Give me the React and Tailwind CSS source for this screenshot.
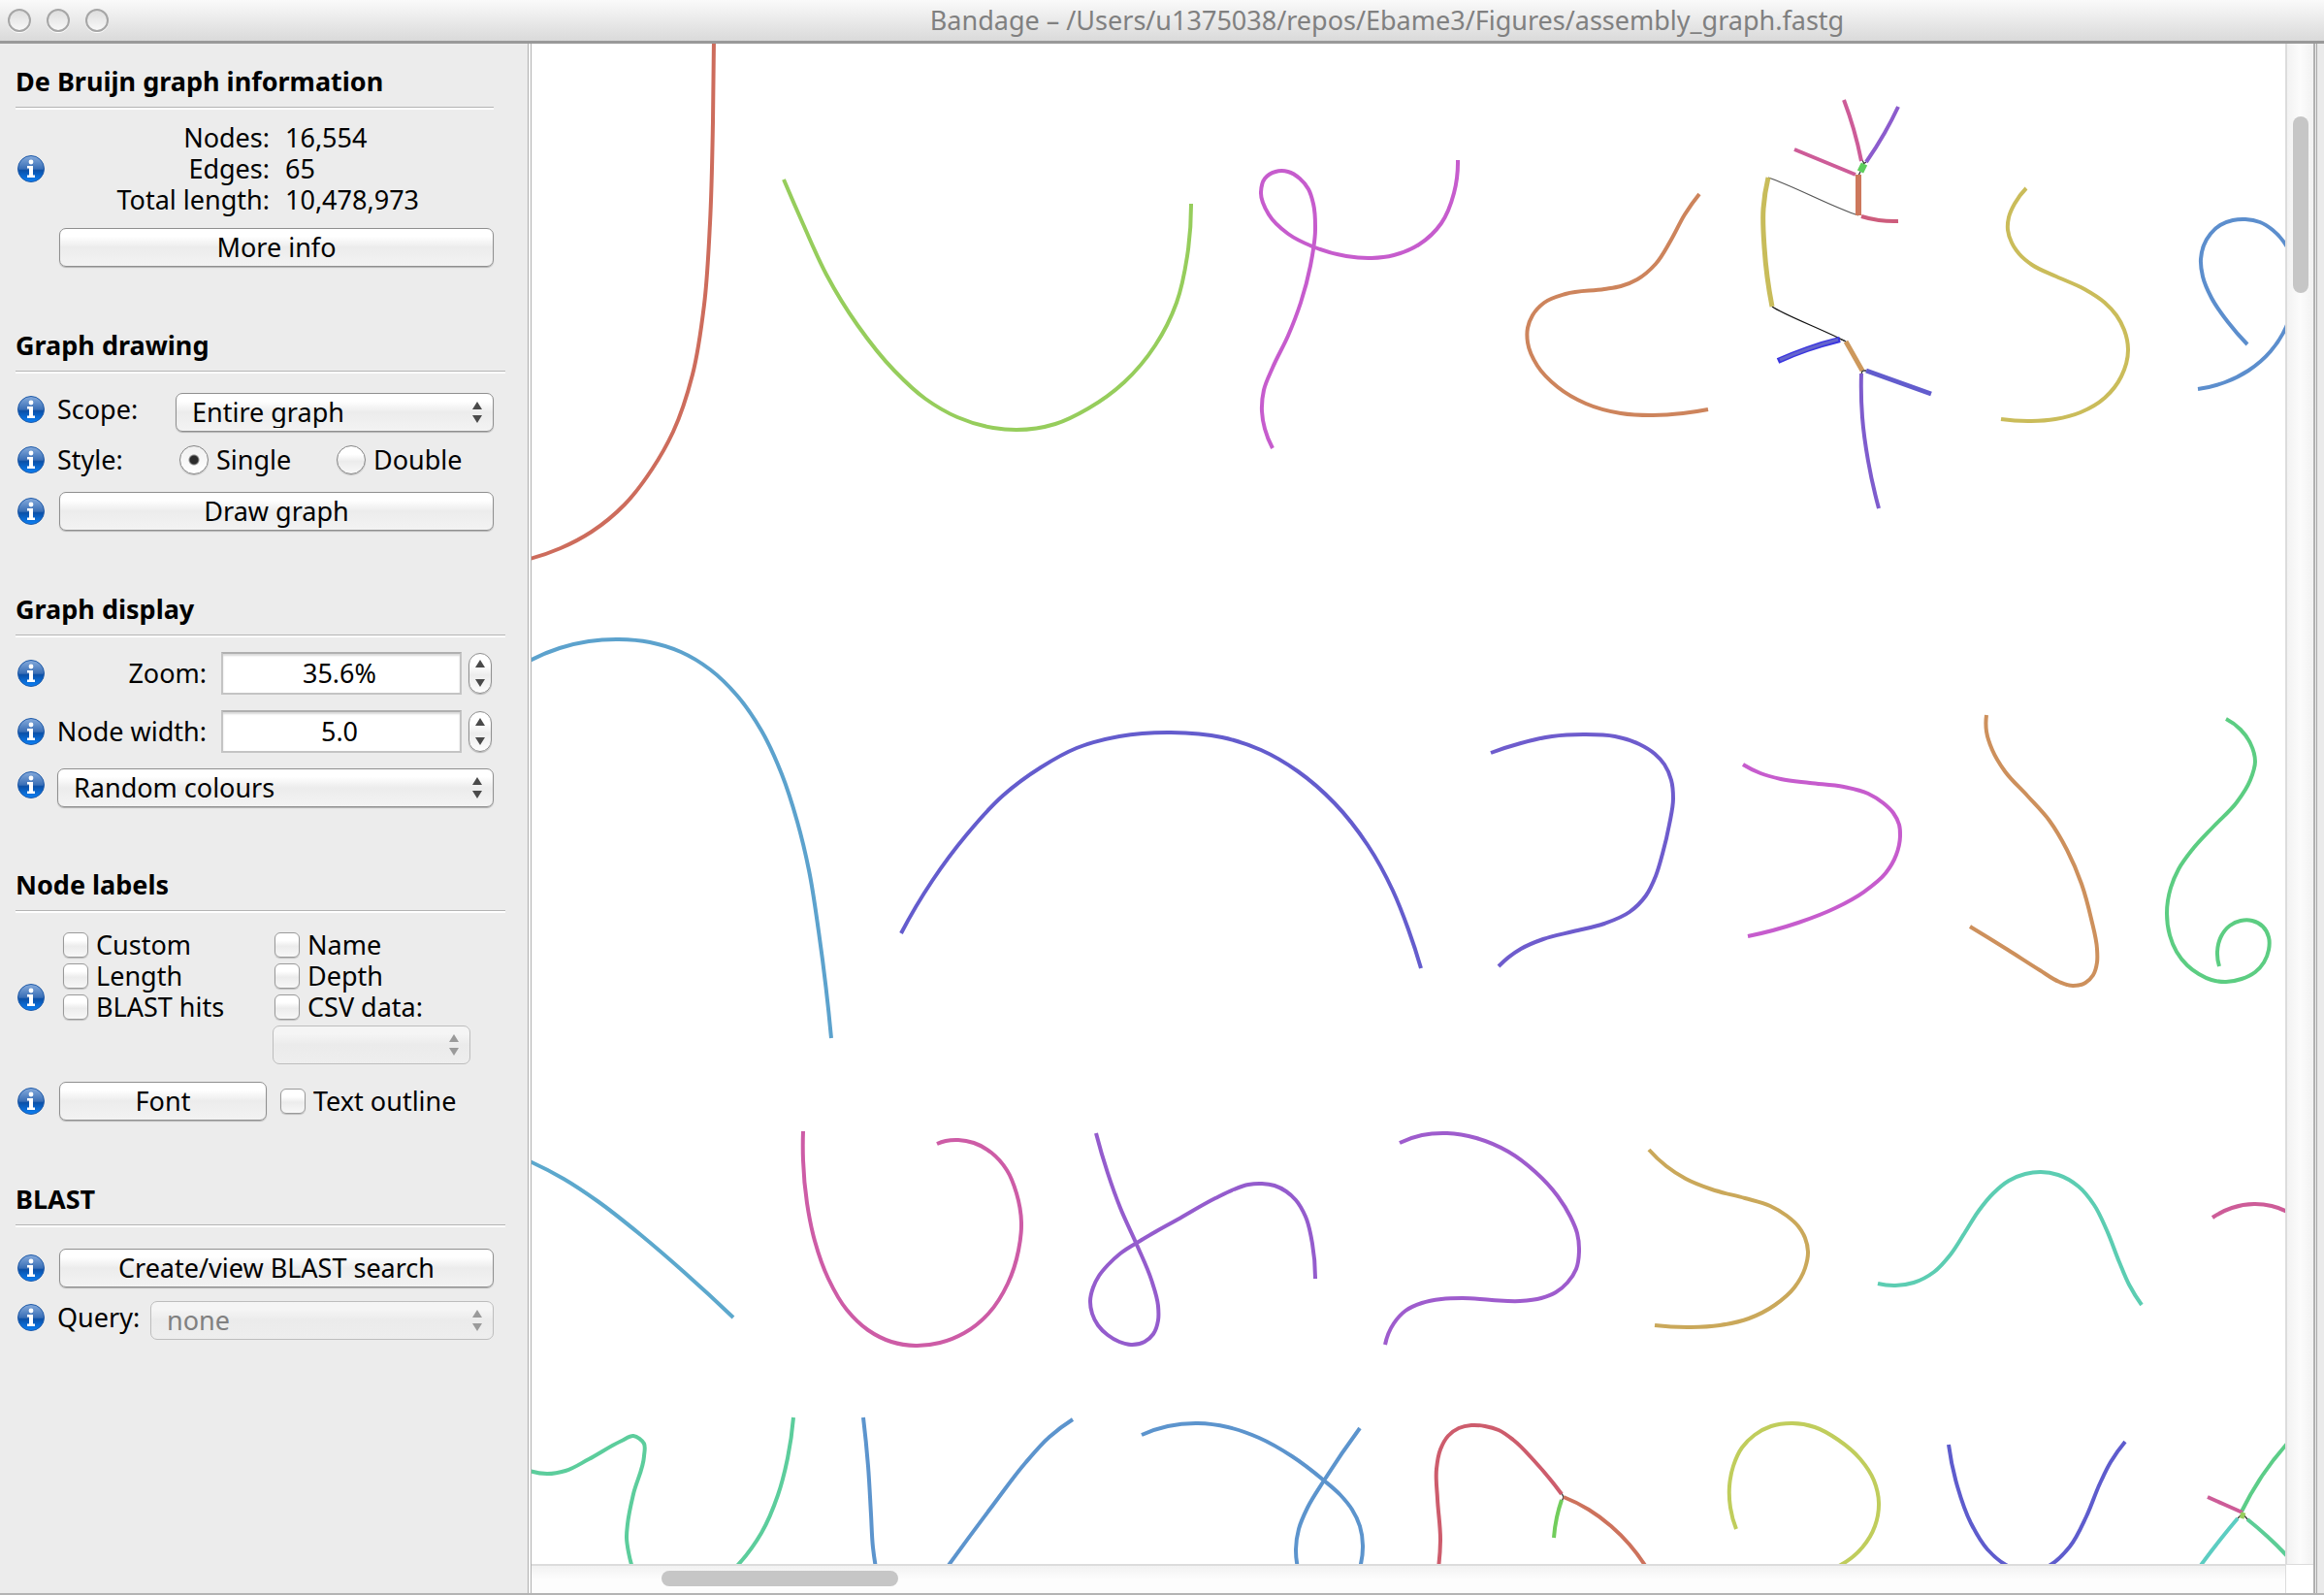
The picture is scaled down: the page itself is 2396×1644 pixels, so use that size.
import { useId, useState } from "react";

/*
 * Smooth path through a flat list of x,y values: cubic Beziers whose tangents
 * are weighted by the chord length on either side of each point.
 */
function smooth(flat) {
  const p = [];
  for (let i = 0; i < flat.length; i += 2) p.push([flat[i], flat[i + 1]]);
  const n = p.length;
  const len = [];
  for (let i = 0; i < n - 1; i++) len.push(Math.hypot(p[i + 1][0] - p[i][0], p[i + 1][1] - p[i][1]));
  const slope = (i, k) => (p[i + 1][k] - p[i][k]) / len[i];
  const tan = p.map((_, i) =>
    [0, 1].map((k) => {
      if (n === 2) return slope(0, k);
      const mid = (j) => (slope(j - 1, k) * len[j] + slope(j, k) * len[j - 1]) / (len[j - 1] + len[j]);
      if (i === 0) return 2 * slope(0, k) - mid(1);
      if (i === n - 1) return 2 * slope(n - 2, k) - mid(n - 2);
      return mid(i);
    })
  );
  let d = `M${p[0][0]} ${p[0][1]}`;
  for (let i = 0; i < n - 1; i++) {
    const h = len[i] / 3;
    d += `C${p[i][0] + tan[i][0] * h} ${p[i][1] + tan[i][1] * h} ${p[i + 1][0] - tan[i + 1][0] * h} ${p[i + 1][1] - tan[i + 1][1] * h} ${p[i + 1][0]} ${p[i + 1][1]}`;
  }
  return d;
}

/* Graph nodes: colour, points, optional stroke width. */
const NODES = [
  ["#cd6c5c", [736, 40, 735, 126, 732, 230, 726, 314, 714, 386, 694, 445, 672, 484, 644, 520, 610, 548, 578, 565, 546, 576]],
  ["#96cd5c", [808, 185, 828, 231, 852, 283, 884, 335, 922, 382, 954, 411, 987, 430, 1024, 441, 1048, 443, 1088, 437, 1122, 421, 1159, 394, 1191, 356, 1213, 312, 1224, 264, 1228, 210]],
  ["#c65ccd", [1503, 165, 1499, 199, 1486, 230, 1463, 252, 1437, 263, 1414, 266, 1388, 264, 1353, 254, 1328, 241, 1308, 221, 1300, 198, 1304, 184, 1315, 177, 1328, 177, 1340, 184, 1349, 195, 1354, 210, 1356, 237, 1351, 274, 1341, 312, 1328, 346, 1312, 379, 1303, 402, 1301, 424, 1304, 442, 1312, 462]],
  ["#cd845c", [1752, 200, 1737, 221, 1723, 247, 1707, 272, 1688, 288, 1671, 295, 1654, 298, 1614, 303, 1592, 312, 1580, 325, 1575, 338, 1575, 353, 1585, 377, 1606, 399, 1635, 416, 1671, 426, 1704, 428, 1735, 426, 1761, 422]],
  ["#cd5c98", [1850, 154, 1913, 180]],
  ["#cd5c98", [1901, 103, 1911, 133, 1919, 166]],
  ["#8c5ccd", [1957, 110, 1943, 137, 1924, 167]],
  ["#5ccd5c", [1922, 169, 1918, 177], 7],
  ["#cd785c", [1916, 180, 1916, 222], 6],
  ["#cd5c7c", [1919, 223, 1937, 227, 1957, 228]],
  ["#c8bc5a", [1823, 183, 1818, 215, 1819, 255, 1827, 316], 5],
  ["#3a35e0", [1833, 372, 1863, 360, 1897, 350], 6],
  ["#6464cd", [1835, 371, 1863, 360, 1895, 350], 3],
  ["#cd985c", [1903, 352, 1920, 382], 5],
  ["#625ccd", [1924, 382, 1991, 406], 5],
  ["#7e5ccd", [1919, 385, 1920, 430, 1926, 475, 1937, 524]],
  ["#cabc5a", [2089, 194, 2077, 210, 2071, 224, 2070, 237, 2074, 250, 2082, 262, 2095, 273, 2120, 285, 2149, 298, 2170, 312, 2182, 325, 2190, 340, 2194, 360, 2187, 388, 2170, 410, 2145, 425, 2119, 432, 2094, 434, 2063, 432]],
  ["#5c8ecd", [2317, 355, 2297, 332, 2280, 307, 2271, 285, 2269, 267, 2272, 253, 2279, 241, 2289, 232, 2302, 227, 2315, 226, 2330, 229, 2343, 237, 2357, 253, 2366, 293, 2357, 337, 2341, 362, 2318, 382, 2294, 394, 2266, 401]],

  ["#5ca2cd", [546, 681, 577, 668, 607, 661, 638, 659, 670, 662, 702, 672, 732, 690, 760, 717, 785, 753, 806, 798, 822, 847, 834, 897, 844, 960, 857, 1070]],
  ["#645ccd", [929, 962, 961, 908, 996, 861, 1034, 820, 1073, 791, 1110, 771, 1154, 759, 1207, 755, 1260, 760, 1300, 773, 1338, 795, 1376, 828, 1410, 871, 1436, 918, 1452, 958, 1465, 998]],
  ["#6e5ccd", [1537, 776, 1568, 766, 1600, 759, 1633, 757, 1665, 759, 1690, 767, 1706, 777, 1716, 788, 1723, 804, 1725, 823, 1721, 850, 1714, 880, 1707, 903, 1697, 923, 1680, 940, 1654, 952, 1622, 960, 1591, 968, 1568, 978, 1545, 996]],
  ["#c65ccd", [1797, 788, 1815, 797, 1836, 803, 1866, 807, 1901, 811, 1926, 818, 1942, 828, 1952, 838, 1958, 850, 1959, 862, 1955, 881, 1944, 900, 1922, 919, 1892, 936, 1854, 951, 1802, 965]],
  ["#cd905c", [2048, 737, 2048, 754, 2054, 773, 2067, 795, 2090, 820, 2113, 846, 2131, 876, 2146, 911, 2156, 947, 2162, 978, 2162, 992, 2158, 1005, 2150, 1013, 2137, 1016, 2123, 1012, 2103, 1000, 2070, 979, 2031, 955]],
  ["#5ccd82", [2295, 741, 2310, 752, 2320, 766, 2325, 785, 2320, 804, 2306, 827, 2282, 852, 2260, 876, 2246, 896, 2238, 915, 2234, 941, 2237, 964, 2244, 981, 2255, 995, 2267, 1004, 2280, 1010, 2295, 1012, 2311, 1009, 2325, 1002, 2334, 992, 2339, 979, 2339, 966, 2333, 955, 2322, 949, 2310, 949, 2299, 954, 2290, 965, 2286, 981, 2288, 996]],

  ["#5ca8cd", [546, 1197, 581, 1215, 616, 1238, 662, 1274, 705, 1311, 756, 1358]],
  ["#cd5ca6", [828, 1166, 828, 1196, 832, 1240, 840, 1279, 854, 1318, 873, 1350, 895, 1371, 919, 1383, 944, 1387, 969, 1384, 994, 1374, 1019, 1354, 1039, 1323, 1050, 1289, 1053, 1260, 1048, 1230, 1038, 1206, 1022, 1188, 1004, 1178, 988, 1175, 975, 1176, 966, 1179]],
  ["#945ccd", [1130, 1168, 1142, 1209, 1155, 1245, 1172, 1283, 1187, 1319, 1194, 1346, 1194, 1361, 1189, 1375, 1180, 1383, 1166, 1386, 1154, 1383, 1142, 1376, 1132, 1366, 1126, 1354, 1124, 1341, 1127, 1327, 1133, 1315, 1142, 1304, 1155, 1292, 1177, 1278, 1214, 1257, 1253, 1235, 1272, 1226, 1287, 1221, 1301, 1220, 1314, 1222, 1326, 1228, 1336, 1237, 1346, 1254, 1353, 1282, 1356, 1318]],
  ["#9e5ccd", [1443, 1178, 1466, 1170, 1492, 1168, 1522, 1173, 1555, 1187, 1583, 1208, 1606, 1233, 1619, 1254, 1626, 1271, 1628, 1290, 1625, 1308, 1616, 1322, 1604, 1332, 1589, 1338, 1567, 1341, 1538, 1340, 1508, 1338, 1486, 1339, 1466, 1343, 1449, 1351, 1437, 1364, 1428, 1386]],
  ["#caa85a", [1700, 1185, 1718, 1202, 1738, 1215, 1765, 1226, 1799, 1235, 1825, 1243, 1842, 1253, 1854, 1264, 1861, 1276, 1864, 1290, 1861, 1307, 1850, 1327, 1830, 1345, 1803, 1359, 1773, 1366, 1743, 1368, 1706, 1366]],
  ["#5ccdb2", [1936, 1323, 1954, 1325, 1973, 1322, 1994, 1311, 2011, 1293, 2026, 1270, 2040, 1248, 2055, 1230, 2071, 1217, 2088, 1210, 2104, 1208, 2122, 1211, 2143, 1223, 2159, 1242, 2172, 1268, 2185, 1301, 2195, 1324, 2208, 1345]],
  ["#cd5c98", [2281, 1255, 2301, 1245, 2324, 1241, 2342, 1243, 2360, 1250]],

  ["#5ccd9c", [546, 1516, 564, 1519, 583, 1516, 607, 1504, 641, 1485, 653, 1480, 664, 1488, 664, 1501, 653, 1540, 647, 1571, 646, 1585, 648, 1600, 652, 1616]],
  ["#5ccd9c", [818, 1461, 812, 1503, 802, 1541, 785, 1580, 758, 1616]],
  ["#5c94cd", [890, 1461, 895, 1511, 898, 1561, 900, 1595, 903, 1616]],
  ["#5c94cd", [1106, 1463, 1082, 1481, 1057, 1508, 1024, 1551, 976, 1616]],
  ["#5c94cd", [1177, 1479, 1204, 1470, 1235, 1467, 1266, 1471, 1298, 1482, 1332, 1501, 1365, 1526, 1382, 1541, 1394, 1556, 1402, 1573, 1405, 1593, 1402, 1616]],
  ["#5c94cd", [1402, 1472, 1365, 1526, 1348, 1554, 1339, 1576, 1336, 1597, 1338, 1616]],
  ["#cd5c6c", [1483, 1616, 1485, 1588, 1482, 1545, 1481, 1514, 1485, 1494, 1493, 1480, 1504, 1472, 1517, 1469, 1531, 1470, 1545, 1474, 1560, 1484, 1582, 1506, 1610, 1540]],
  ["#72cd5c", [1610, 1546, 1605, 1564, 1602, 1585]],
  ["#cd725c", [1612, 1543, 1638, 1556, 1661, 1573, 1680, 1592, 1697, 1615]],
  ["#c0cd5c", [1790, 1576, 1784, 1554, 1783, 1532, 1787, 1511, 1796, 1492, 1809, 1479, 1826, 1470, 1848, 1467, 1871, 1471, 1895, 1484, 1918, 1504, 1932, 1526, 1937, 1549, 1933, 1573, 1920, 1595, 1894, 1615]],
  ["#5e5ccd", [2009, 1489, 2018, 1532, 2032, 1570, 2049, 1597, 2068, 1613, 2090, 1621, 2114, 1613, 2134, 1594, 2151, 1563, 2165, 1529, 2176, 1507, 2191, 1486]],
  ["#5ccd88", [2311, 1558, 2333, 1520, 2358, 1488]],
  ["#cd5c98", [2276, 1543, 2312, 1559]],
  ["#5ccdc2", [2307, 1565, 2289, 1587, 2267, 1616]],
  ["#5ccd96", [2317, 1566, 2338, 1584, 2360, 1606]],
  ["#96cd5c", [2313, 1559, 2311, 1565], 5],
];

/* Thin links between nodes. */
const EDGES = [
  ["#555555", "M1823 183C1850 192 1890 214 1916 222"],
  ["#111111", "M1827 316C1838 324 1880 340 1903 352"],
  ["#333333", "M1920 165L1922 169M1924 167L1921 169M1918 177L1916 181M1903 352L1896 349M1920 382L1919 386M1920 382L1924 382"],
  ["#333333", "M1610 1539L1612 1543L1610 1548M2307 1565L2312 1560L2318 1567"],
];

function GraphCanvas() {
  return (
    <svg
      className="block h-full w-full"
      viewBox="548 45 1808 1567"
      preserveAspectRatio="xMinYMin slice"
      fill="none"
      role="img"
      aria-label="Assembly graph"
    >
      {EDGES.map(([c, d], i) => (
        <path key={i} d={d} stroke={c} strokeWidth="1.3" />
      ))}
      {NODES.map(([c, pts, w], i) => (
        <path key={i} d={smooth(pts)} stroke={c} strokeWidth={w || 4} strokeLinejoin="round" />
      ))}
    </svg>
  );
}

function InfoButton({ topic }) {
  const id = useId();
  return (
    <button type="button" aria-label={`About ${topic}`} className="size-7 shrink-0">
      <svg viewBox="0 0 28 28" className="block size-7">
        <defs>
          <linearGradient id={id} x1="0" y1="0" x2="0" y2="1">
            <stop offset="0" stopColor="#86abdc" />
            <stop offset="0.5" stopColor="#3a6fb6" />
            <stop offset="0.56" stopColor="#0a50a8" />
            <stop offset="1" stopColor="#0a80f6" />
          </linearGradient>
        </defs>
        <circle cx="14" cy="14" r="13.5" fill={`url(#${id})`} stroke="#1f5aa8" />
        <circle cx="14" cy="7" r="2.4" fill="#fff" />
        <path d="M10 11h6v9.5h2V23h-8v-2.500h2V13.500h-2z" fill="#fff" />
      </svg>
    </button>
  );
}

function PushButton({ children, className = "" }) {
  return (
    <button
      type="button"
      className={`h-10 rounded-[7px] border border-[#8f8f8f] bg-linear-to-b from-white from-20% via-[#ececec] via-50% to-[#f3f3f3] text-center leading-9 shadow-[0_1px_1px_rgba(0,0,0,0.25)] ${className}`}
    >
      {children}
    </button>
  );
}

function Arrows({ className }) {
  return (
    <svg viewBox="0 0 10 22" className={`pointer-events-none absolute top-[9px] right-3 h-[22px] w-[10px] ${className}`}>
      <path d="M5 0L10 8H0zM5 22L10 14H0z" fill="currentColor" />
    </svg>
  );
}

function Popup({ id, label, options, disabled, className = "" }) {
  return (
    <div className={`relative ${className}`}>
      <select
        id={id}
        aria-label={label}
        disabled={disabled}
        className="block h-10 w-full appearance-none rounded-[7px] border border-[#8f8f8f] bg-linear-to-b from-white from-20% via-[#ececec] via-50% to-[#f3f3f3] pr-8 pl-4 shadow-[0_1px_1px_rgba(0,0,0,0.25)] disabled:border-[#bdbdbd] disabled:from-[#f5f5f5] disabled:via-[#ebebeb] disabled:to-[#eeeeee] disabled:text-[#808080] disabled:opacity-100 disabled:shadow-none"
      >
        {options.map((o) => (
          <option key={o}>{o}</option>
        ))}
      </select>
      <Arrows className={disabled ? "text-[#9a9a9a]" : "text-[#4a4a4a]"} />
    </div>
  );
}

function CheckBox({ children }) {
  return (
    <label className="flex h-8 items-center gap-2 whitespace-nowrap">
      <input
        type="checkbox"
        className="size-[26px] shrink-0 appearance-none rounded-md border border-[#9a9a9a] bg-linear-to-b from-white from-30% via-[#ececec] via-55% to-[#f8f8f8] shadow-[0_1px_1px_rgba(0,0,0,0.2)] checked:bg-[#7ba3d6]"
      />
      {children}
    </label>
  );
}

function Radio({ value, current, onPick }) {
  return (
    <label className="flex items-center gap-2">
      <input
        type="radio"
        name="style"
        checked={current === value}
        onChange={() => onPick(value)}
        className="size-[30px] appearance-none rounded-full border border-[#858585] bg-[linear-gradient(#ffffff_30%,#ececec_55%,#f8f8f8)] shadow-[0_1px_1px_rgba(0,0,0,0.2)] checked:bg-[radial-gradient(circle,#2b2b2b_0_4px,transparent_6px),linear-gradient(#f0f0f0,#ffffff)]"
      />
      {value}
    </label>
  );
}

function SpinRow({ id, label, value }) {
  return (
    <div className="flex h-11 items-center pr-[37px] pl-[18px]">
      <InfoButton topic={label} />
      <label htmlFor={id} className="w-[167px] text-right whitespace-nowrap">
        {label}:
      </label>
      <input
        id={id}
        defaultValue={value}
        className="ml-[15px] h-11 w-0 flex-1 border-2 border-[#c4c4c4] border-t-[#b0b0b0] bg-white pr-1 pb-[2px] text-center shadow-[inset_0_2px_2px_rgba(0,0,0,0.15)]"
      />
      <div className="ml-[7px] flex h-[42px] w-6 flex-col rounded-xl border border-[#8f8f8f] bg-linear-to-b from-white from-30% via-[#ececec] via-55% to-white text-[#4a4a4a] shadow-[0_1px_1px_rgba(0,0,0,0.25)]">
        <button type="button" aria-label={`Increase ${label}`} className="flex flex-1 items-center justify-center">
          <svg viewBox="0 0 10 8" className="h-2 w-[10px]"><path d="M5 0l5 8H0z" fill="currentColor" /></svg>
        </button>
        <button type="button" aria-label={`Decrease ${label}`} className="flex flex-1 items-center justify-center">
          <svg viewBox="0 0 10 8" className="h-2 w-[10px]"><path d="M5 8l5-8H0z" fill="currentColor" /></svg>
        </button>
      </div>
    </div>
  );
}

function Heading({ children, narrow }) {
  return (
    <>
      <h2 className="pl-4 font-bold">{children}</h2>
      <div className={`mt-[10px] ml-4 h-[3px] border-t border-[#b4b4b4] bg-white ${narrow ? "mr-[35px]" : "mr-[23px]"}`} />
    </>
  );
}

function Sidebar() {
  const [style, setStyle] = useState("Single");
  return (
    <aside className="w-[544px] shrink-0 bg-[#ececec] pt-[23px]">
      <section>
        <Heading narrow>De Bruijn graph information</Heading>
        <div className="mt-[13px] flex items-center pl-[18px]">
          <InfoButton topic="graph information" />
          <dl className="grid flex-1 grid-cols-[232px_1fr] gap-x-4">
            <dt className="text-right">Nodes:</dt>
            <dd>16,554</dd>
            <dt className="text-right">Edges:</dt>
            <dd>65</dd>
            <dt className="text-right">Total length:</dt>
            <dd>10,478,973</dd>
          </dl>
        </div>
        <div className="mt-[13px] flex pr-[35px] pl-[61px]">
          <PushButton className="flex-1">More info</PushButton>
        </div>
      </section>

      <section className="mt-[65px]">
        <Heading>Graph drawing</Heading>
        <div className="mt-5 flex items-start pr-[35px] pl-[18px]">
          <div className="flex h-[34px] w-[163px] items-center gap-[13px]">
            <InfoButton topic="scope" />
            <label htmlFor="scope">Scope:</label>
          </div>
          <Popup id="scope" options={["Entire graph", "Around nodes"]} className="flex-1" />
        </div>
        <div className="mt-[13px] flex h-8 items-center pl-[18px]" role="radiogroup" aria-label="Style">
          <div className="flex w-[167px] items-center gap-[13px]">
            <InfoButton topic="style" />
            <span>Style:</span>
          </div>
          <div className="grid grid-cols-[162px_162px]">
            <Radio value="Single" current={style} onPick={setStyle} />
            <Radio value="Double" current={style} onPick={setStyle} />
          </div>
        </div>
        <div className="mt-[17px] flex items-center gap-[15px] pr-[35px] pl-[18px]">
          <InfoButton topic="drawing" />
          <PushButton className="flex-1">Draw graph</PushButton>
        </div>
      </section>

      <section className="mt-[65px]">
        <Heading>Graph display</Heading>
        <div className="mt-[15px] flex flex-col gap-4">
          <SpinRow id="zoom" label="Zoom" value="35.6%" />
          <SpinRow id="node-width" label="Node width" value="5.0" />
          <div className="flex items-start gap-[13px] pr-[35px] pl-[18px]">
            <div className="flex h-[34px] items-center">
              <InfoButton topic="colours" />
            </div>
            <Popup label="Colour scheme" options={["Random colours", "Uniform colour"]} className="flex-1" />
          </div>
        </div>
      </section>

      <section className="mt-16">
        <Heading>Node labels</Heading>
        <div className="mt-[17px] flex items-center pl-[18px]">
          <InfoButton topic="node labels" />
          <div className="ml-[19px] grid grid-cols-[218px_204px]">
            <CheckBox>Custom</CheckBox>
            <CheckBox>Name</CheckBox>
            <CheckBox>Length</CheckBox>
            <CheckBox>Depth</CheckBox>
            <CheckBox>BLAST hits</CheckBox>
            <CheckBox>CSV data:</CheckBox>
            <Popup label="CSV column" disabled options={[""]} className="col-start-2 mt-[3px] mr-[2px] -ml-[2px]" />
          </div>
        </div>
        <div className="mt-[18px] flex items-center pl-[18px]">
          <InfoButton topic="font" />
          <PushButton className="mr-[14px] ml-[15px] w-[214px]">Font</PushButton>
          <CheckBox>Text outline</CheckBox>
        </div>
      </section>

      <section className="mt-[65px]">
        <Heading>BLAST</Heading>
        <div className="mt-[22px] flex items-center gap-[15px] pr-[35px] pl-[18px]">
          <InfoButton topic="BLAST search" />
          <PushButton className="flex-1">Create/view BLAST search</PushButton>
        </div>
        <div className="mt-[14px] flex items-start pr-[35px] pl-[18px]">
          <div className="flex h-[34px] w-[137px] items-center gap-[13px]">
            <InfoButton topic="query" />
            <label htmlFor="query">Query:</label>
          </div>
          <Popup id="query" disabled options={["none"]} className="flex-1" />
        </div>
      </section>
    </aside>
  );
}

function TitleBar() {
  return (
    <header className="flex h-[45px] shrink-0 items-center border-b-[3px] border-[#999999] bg-linear-to-b from-[#fafafa] to-[#dadada] pl-2">
      <div className="flex w-[456px] shrink-0 gap-4">
        {["Close", "Minimise", "Zoom window"].map((n) => (
          <button
            key={n}
            type="button"
            aria-label={n}
            className="size-6 rounded-full border-2 border-[#a6a6a6] bg-linear-to-b from-[#dedede] to-[#f8f8f8] shadow-[0_1px_0_#ffffff]"
          />
        ))}
      </div>
      <h1 className="flex-1 text-center whitespace-nowrap text-[#808080]">
        Bandage – /Users/u1375038/repos/Ebame3/Figures/assembly_graph.fastg
      </h1>
    </header>
  );
}

export default function App() {
  return (
    <div className="flex h-screen flex-col overflow-hidden bg-[#ececec] font-['Noto_Sans','Open_Sans',sans-serif] text-[27px] leading-8 text-black">
      <TitleBar />
      <div className="flex min-h-0 flex-1 border-b-2 border-[#b4b4b4]">
        <Sidebar />
        <main className="flex min-w-0 flex-1 border-r-2 border-l-4 border-[#b0b0b0] bg-white [border-left-style:double]">
          <div className="flex min-w-0 flex-1 flex-col">
            <div className="min-h-0 flex-1 overflow-hidden">
              <GraphCanvas />
            </div>
            <div className="h-[30px] shrink-0 border-t-2 border-[#dcdcdc] bg-linear-to-b from-[#f2f2f2] to-[#fdfdfd] to-50% pt-[5px] pl-[134px]">
              <div className="h-4 w-[244px] rounded-full bg-[#c6c6c6]" />
            </div>
          </div>
          <div className="flex w-[29px] shrink-0 flex-col">
            <div className="flex-1 border-l-2 border-[#dcdcdc] bg-linear-to-r from-[#f2f2f2] via-[#fcfcfc] via-50% to-[#f2f2f2] pt-[75px] pl-[6px]">
              <div className="h-[182px] w-4 rounded-full bg-[#c6c6c6]" />
            </div>
            <div className="h-[30px] border-t border-l border-[#dcdcdc] bg-white" />
          </div>
        </main>
        <div className="ml-px w-2 shrink-0 border-l border-[#a8a8a8] bg-[#eaeaea]" />
      </div>
    </div>
  );
}
